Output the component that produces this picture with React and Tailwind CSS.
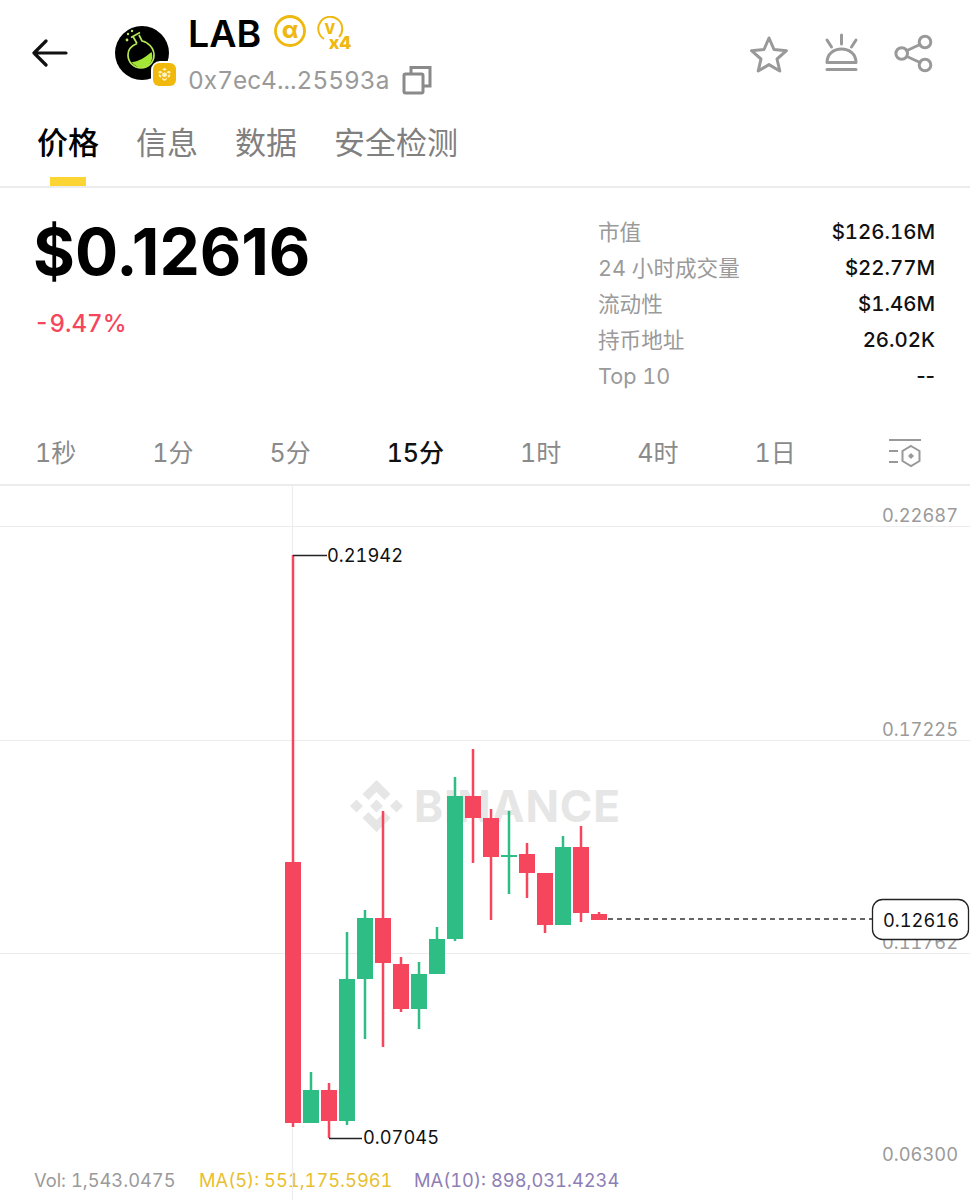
import React from 'react';

const FONT = "font-['Inter','Noto_Sans_CJK_SC',sans-serif]";

const stats = [
  { label: '市值', value: '$126.16M' },
  { label: '24 小时成交量', value: '$22.77M' },
  { label: '流动性', value: '$1.46M' },
  { label: '持币地址', value: '26.02K' },
  { label: 'Top 10', value: '--' },
];

const frames = ['1秒', '1分', '5分', '15分', '1时', '4时', '1日'];

// x = wick centre, page coordinates
const candles = [
  { x: 293, up: false, top: 862, bottom: 1123, high: 555, low: 1127 },
  { x: 311, up: true, top: 1090, bottom: 1123, high: 1072, low: 1123 },
  { x: 329, up: false, top: 1090, bottom: 1121, high: 1083, low: 1138 },
  { x: 347, up: true, top: 979, bottom: 1121, high: 932, low: 1125 },
  { x: 365, up: true, top: 918, bottom: 979, high: 910, low: 1039 },
  { x: 383, up: false, top: 918, bottom: 963, high: 811, low: 1047 },
  { x: 401, up: false, top: 964, bottom: 1009, high: 957, low: 1012 },
  { x: 419, up: true, top: 974, bottom: 1009, high: 962, low: 1029 },
  { x: 437, up: true, top: 939, bottom: 974, high: 927, low: 974 },
  { x: 455, up: true, top: 796, bottom: 939, high: 777, low: 941 },
  { x: 473, up: false, top: 796, bottom: 818, high: 749, low: 863 },
  { x: 491, up: false, top: 818, bottom: 857, high: 809, low: 920 },
  { x: 509, up: true, top: 855, bottom: 857, high: 811, low: 894 },
  { x: 527, up: false, top: 854, bottom: 873, high: 843, low: 898 },
  { x: 545, up: false, top: 873, bottom: 925, high: 873, low: 933 },
  { x: 563, up: true, top: 847, bottom: 925, high: 836, low: 925 },
  { x: 581, up: false, top: 847, bottom: 913, high: 826, low: 922 },
  { x: 599, up: false, top: 914, bottom: 920, high: 912, low: 920 },
];

const axis = [
  { y: 526, textY: 522, label: '0.22687' },
  { y: 740, textY: 736, label: '0.17225' },
  { y: 953, textY: 949, label: '0.11762' },
  { y: 1166, textY: 1161, label: '0.06300' },
];

const Avatar = () => (
  <div className="relative w-[54px] h-[54px] shrink-0">
    <svg viewBox="0 0 54 54" className="w-[54px] h-[54px]">
      <circle cx="27" cy="27" r="27" fill="#000" />
      <path d="M16.500 36c5 .5 13-4 20-10 1.500 4 1 9-2.500 12.500-5 5-13 3.500-17.500-2.500z" fill="#a3e635" />
      <path d="M22 17.500c-5 2-9 6-9 11.500a13 13 0 0 0 26 0c0-7-6-13-12-14l-3-6" fill="none" stroke="#b5e853" strokeWidth="1.700" />
      <path d="M22 17.500l-4-7M16 11.500l9-5" fill="none" stroke="#b5e853" strokeWidth="1.700" />
      <circle cx="13" cy="8" r="1.200" fill="#b5e853" />
      <circle cx="17" cy="5" r="1.200" fill="#b5e853" />
      <circle cx="12" cy="14" r="1.400" fill="#b5e853" />
    </svg>
    <div className="absolute left-[36px] top-[35px] w-[27px] h-[27px] rounded-[9px] bg-white flex items-center justify-center">
      <div className="w-[23px] h-[23px] rounded-[6px] bg-[#f0b90b] flex items-center justify-center">
        <svg viewBox="0 0 16 16" className="w-[15px] h-[15px]" fill="#fff3c4">
          <path d="M8 1l2.500 1.500L8 4 5.500 2.500zM3.500 4L6 5.500 3.500 7 1.500 6V5zM12.500 4l2 1v1l-2 1L10 5.500zM8 5.500L10.500 7v2.500L8 11 5.500 9.500V7zM2 7.500l2.500 1.500v2.500L2 10zM14 7.500V10l-2.500 1.500V9zM5.500 11.500L8 13l2.500-1.500v1.500L8 15l-2.500-2z" />
        </svg>
      </div>
    </div>
  </div>
);

const CopyIcon = () => (
  <svg viewBox="0 0 30 30" className="w-[30px] h-[30px]" fill="none" stroke="#8a8a8a" strokeWidth="3">
    <rect x="2" y="9" width="19" height="19" rx="1.500" />
    <path d="M9 8V2.500h19V21h-6" />
  </svg>
);

const Badges = () => (
  <div className="flex items-start ml-[12px] mt-[3px]">
    <svg viewBox="0 0 34 34" className="w-[34px] h-[34px]">
      <circle cx="17" cy="17" r="14.500" fill="none" stroke="#eeb80f" strokeWidth="2.800" />
      <text x="17" y="24" textAnchor="middle" fontSize="23" fontWeight="800" fill="#eeb80f" fontFamily="Inter">α</text>
    </svg>
    <svg viewBox="0 0 40 36" className="w-[40px] h-[36px] ml-[8px] mt-[2px]">
      <path d="M9 23a12 12 0 1 1 15-2" fill="none" stroke="#eeb80f" strokeWidth="2" />
      <text x="15" y="18" textAnchor="middle" fontSize="14" fontWeight="800" fill="#eeb80f" fontFamily="Inter">V</text>
      <text x="25" y="33" textAnchor="middle" fontSize="18" fontWeight="800" fill="#eeb80f" fontFamily="Inter">x4</text>
    </svg>
  </div>
);

const HeaderActions = () => (
  <svg viewBox="748 30 190 44" className="w-[190px] h-[44px]" fill="none" stroke="#999" strokeWidth="3" strokeLinecap="round" strokeLinejoin="round">
    <path d="M769 37l5 11.500 12.500 1.200-9.500 8.300 2.800 12-10.800-6.400-10.800 6.400 2.800-12-9.500-8.300 12.500-1.200z" />
    <path d="M827 61.500c0-18 29-18 29 0zM827 68.500h29" />
    <path d="M841.500 34v9M827 39l4.500 7M856 39l-4.500 7" />
    <circle cx="901.700" cy="52.500" r="5.800" />
    <circle cx="925" cy="41" r="5.800" />
    <circle cx="925" cy="64" r="5.800" />
    <path d="M907 49.500l13-6M907 55.500l13 6" />
  </svg>
);

const IndicatorIcon = () => (
  <svg viewBox="0 0 34 34" className="w-[34px] h-[34px] ml-[16px]" fill="none" stroke="#999" strokeWidth="2">
    <path d="M1 3h32M1 14h9M1 25h9" />
    <path d="M23 9l8.500 5v10L23 29l-8.500-5V14z" />
    <path d="M23 16l3 3-3 3-3-3z" fill="#999" stroke="none" />
  </svg>
);

const Watermark = () => (
  <g fill="#e6e6e6">
    <path d="M376.500 780l14 14-6 6-8-8-8 8-6-6zM350 806l6.500-6.500 6.500 6.500-6.500 6.500zM376.500 799.500l6.500 6.500-6.500 6.500-6.500-6.500zM403 806l-6.500 6.500L390 806l6.500-6.500zM376.500 832l-14-14 6-6 8 8 8-8 6 6z" />
    <text x="414" y="822" fontSize="44" fontWeight="700" textLength="206" fontFamily="Inter">BINANCE</text>
  </g>
);

const Chart = () => (
  <svg viewBox="0 486 970 680" className="block w-[970px] h-[680px] tabular-nums">
    {axis.map((a) => (
      <line key={a.y} x1="0" x2="970" y1={a.y + 0.5} y2={a.y + 0.5} stroke="#ececec" />
    ))}
    <line x1="292.500" x2="292.500" y1="486" y2="1166" stroke="#ececec" />
    <Watermark />
    {axis.map((a) => (
      <text key={a.label} x="958" y={a.textY} textAnchor="end" fontSize="18.300" fill="#9a9a9a" fontFamily="Inter">{a.label}</text>
    ))}

    {candles.map((c) => {
      const color = c.up ? '#2ebd85' : '#f6465d';
      return (
        <g key={c.x}>
          <rect x={c.x - 1.25} y={c.high} width="2.500" height={c.low - c.high} fill={color} />
          <rect x={c.x - 8} y={c.top} width="16" height={c.bottom - c.top} fill={color} />
        </g>
      );
    })}

    <path d="M293 555.500h34M329 1138.500h33" stroke="#222" strokeWidth="1.500" />
    <text x="327" y="562" fontSize="18.300" fill="#111" fontFamily="Inter">0.21942</text>
    <text x="363" y="1144" fontSize="18.300" fill="#111" fontFamily="Inter">0.07045</text>

    <line x1="608" x2="872" y1="919" y2="919" stroke="#333" strokeWidth="1.500" strokeDasharray="5 4" />
    <rect x="872.500" y="899.500" width="96" height="40" rx="10" fill="#fff" stroke="#222" strokeWidth="1.300" />
    <text x="921" y="927" textAnchor="middle" fontSize="18.300" fill="#111" fontFamily="Inter">0.12616</text>
  </svg>
);

export default function App() {
  return (
    <div className={`${FONT} w-[970px] h-[1200px] overflow-hidden bg-white text-black tabular-nums`}>
      {/* Top bar */}
      <div className="h-[106px] flex items-center pl-[32px] pr-[32px]">
        <svg viewBox="0 0 36 28" className="w-[36px] h-[28px] shrink-0" fill="none" stroke="#111" strokeWidth="3.200" strokeLinecap="round" strokeLinejoin="round">
          <path d="M34 14H2M14 2L2 14l12 12" />
        </svg>
        <div className="ml-[47px]">
          <Avatar />
        </div>
        <div className="ml-[19px] flex flex-col">
          <div className="flex items-start h-[46px]">
            <span className="text-[37.500px] leading-[46px] font-semibold">LAB</span>
            <Badges />
          </div>
          <div className="flex items-center h-[32px] mt-[7px]">
            <span className="text-[24.400px] leading-[32px] text-[#9a9a9a]">0x7ec4...25593a</span>
            <div className="ml-[13px]">
              <CopyIcon />
            </div>
          </div>
        </div>
        <div className="ml-auto">
          <HeaderActions />
        </div>
      </div>

      {/* Tabs */}
      <div className="h-[82px] border-b-2 border-[#ececec] flex gap-[37px] px-[37px] pt-[18px]">
        <div className="flex flex-col">
          <span className="text-[31px] leading-[38px] font-medium">价格</span>
          <div className="w-[36px] h-[9px] bg-[#fcd535] mx-auto mt-[15px]" />
        </div>
        <span className="text-[31px] leading-[38px] text-[#808080]">信息</span>
        <span className="text-[31px] leading-[38px] text-[#808080]">数据</span>
        <span className="text-[31px] leading-[38px] text-[#808080]">安全检测</span>
      </div>

      {/* Price + stats */}
      <div className="h-[232px] flex justify-between pt-[26px] pl-[33px] pr-[35px]">
        <div>
          <div className="text-[64px] leading-[76px] font-bold normal-nums">$0.12616</div>
          <div className="text-[24px] leading-[30px] mt-[19px] ml-[1px] text-[#f6465d] font-medium">-9.47%</div>
        </div>
        <div className="w-[337px]">
          {stats.map((s) => (
            <div key={s.label} className="h-[36px] flex items-center justify-between text-[21.600px]">
              <span className="text-[#9a9a9a]">{s.label}</span>
              <span className={s.value === '--' ? 'font-medium text-[20.400px] text-[#111] normal-nums' : 'font-medium text-[20.400px] text-[#111]'}>{s.value}</span>
            </div>
          ))}
        </div>
      </div>

      {/* Timeframes */}
      <div className="h-[66px] border-b-2 border-[#ececec] flex items-center gap-[76px] pl-[35px] pt-[3px]">
        {frames.map((f) => (
          <span key={f} className={f === '15分' ? 'text-[25px] font-medium text-[#111]' : 'text-[25px] text-[#8a8a8a]'}>{f}</span>
        ))}
        <IndicatorIcon />
      </div>

      <Chart />

      {/* Legend */}
      <div className="relative h-[34px] flex items-center pl-[34px] pb-[4px] text-[18.300px]">
        <div className="absolute left-[292px] top-0 bottom-0 w-px bg-[#ececec]" />
        <span className="text-[#9a9a9a] w-[165px]">Vol: 1,543.0475</span>
        <span className="text-[#e8bf2f] w-[215px]">MA(5): 551,175.5961</span>
        <span className="text-[#8d7eb5]">MA(10): 898,031.4234</span>
      </div>
    </div>
  );
}
